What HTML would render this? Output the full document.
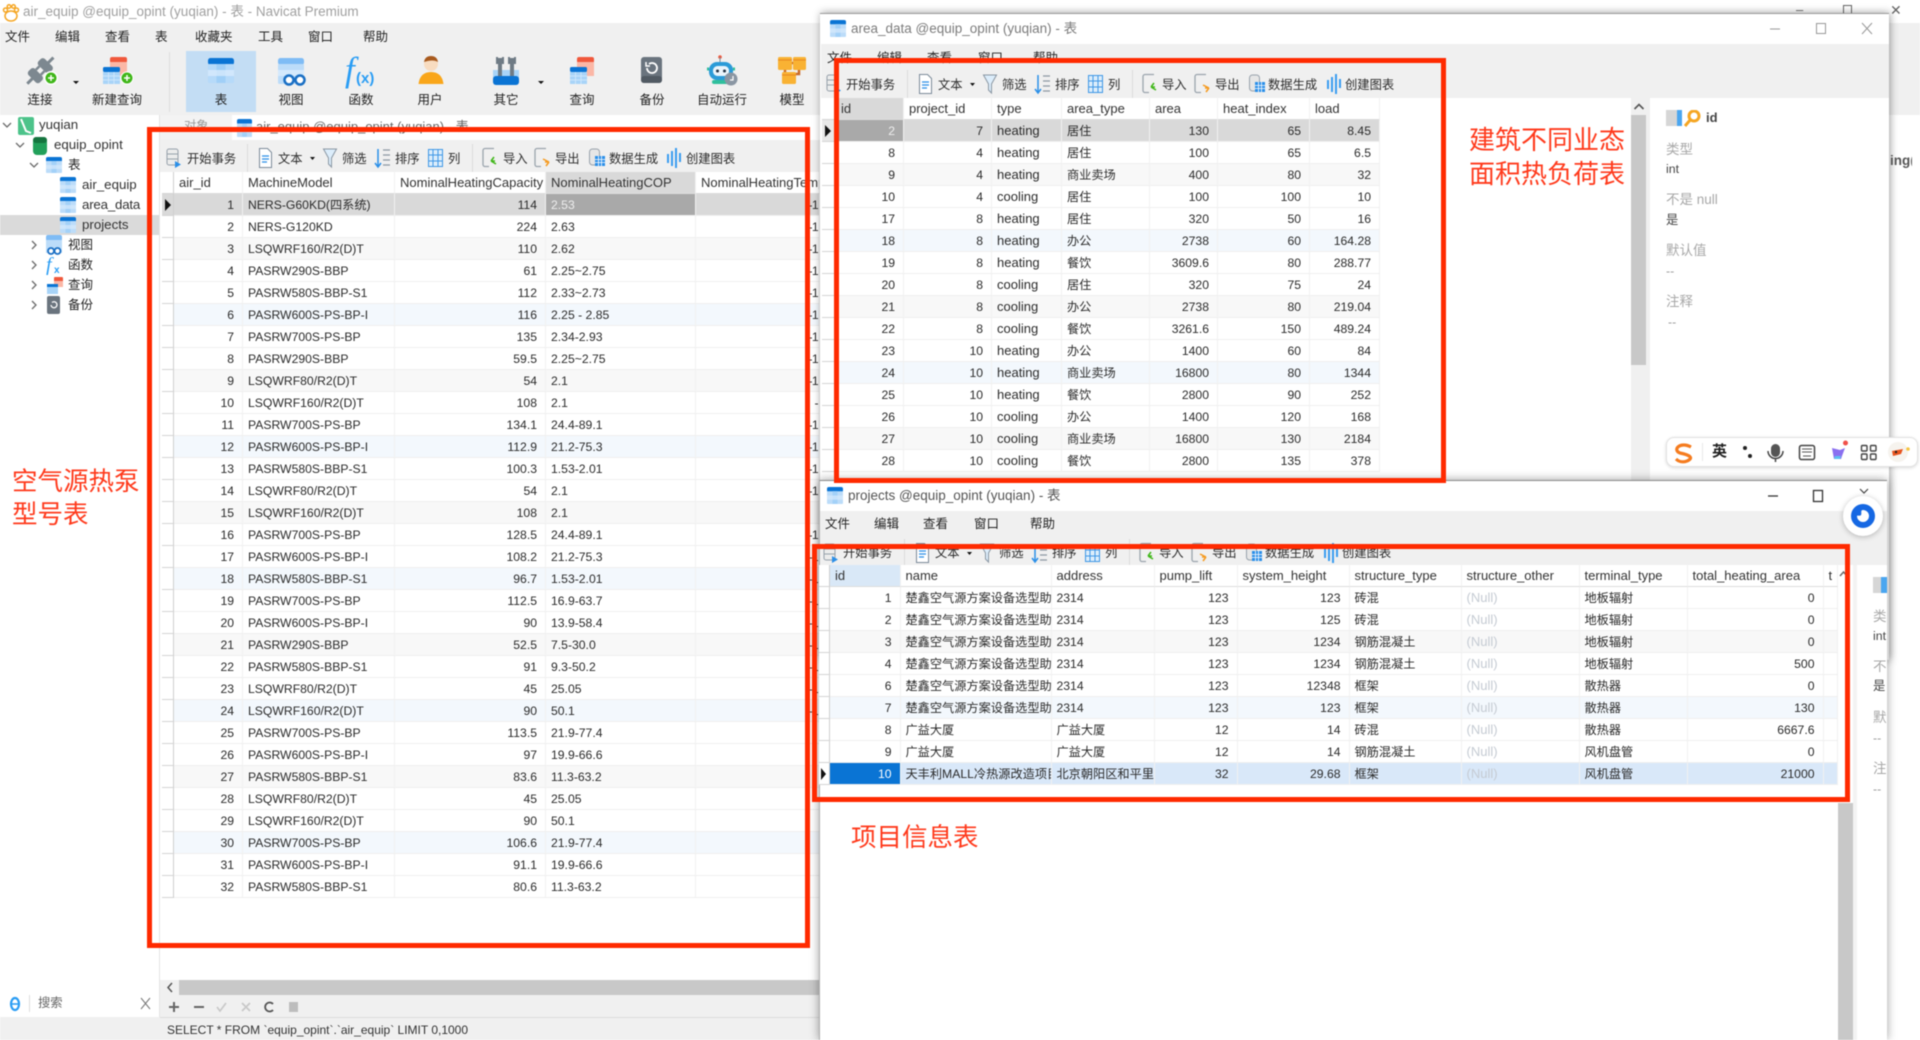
<!DOCTYPE html>
<html lang="zh-CN"><head><meta charset="utf-8"><title>Navicat Premium</title>
<style>
html,body{margin:0;padding:0;background:#fff;width:1920px;height:1040px;overflow:hidden}
*{box-sizing:border-box}
#r{position:absolute;left:0;top:0;width:1920px;height:1040px;overflow:hidden;filter:blur(.55px);font-family:"Liberation Sans","Noto Sans CJK SC",sans-serif;color:#2b2b2b;background:#fff}
.b{position:absolute}
.t{position:absolute;white-space:nowrap;line-height:20px;font-size:12.3px}
.m{font-size:12.5px;color:#222}
.c{transform:translateX(-50%)}
.tree{font-size:13.3px;color:#333}
.ttl{font-size:13.5px;color:#7c7c7c}
.tw{position:absolute;overflow:hidden}
table{border-collapse:separate;border-spacing:0;table-layout:fixed;position:absolute;left:0;top:0}
th,td{height:22px;padding:1px 8px 0 5px;white-space:nowrap;overflow:hidden;font-weight:normal;text-align:left;border-right:1px solid #f1f1f1;border-bottom:1px solid #efefef;line-height:20px;font-size:12.2px;color:#2b2b2b}
th{font-size:13px;padding-top:0;line-height:21px;background:#fff;border-bottom:1px solid #dcdcdc;color:#333}
th:first-child,td:first-child{padding:0;background:#fff;border-right:1px solid #cfcfcf;border-bottom:1px solid #d4d4d4}
tbody tr:nth-child(6n+3) td{background:#f8f8f8}
tbody tr:nth-child(6n) td{background:#f3f8fd}
tbody tr:nth-child(6n+3) td:first-child,tbody tr:nth-child(6n) td:first-child{background:#fff}
#t1 td:nth-child(2),#t1 td:nth-child(4),#t1 td:nth-child(6){text-align:right}
#t1 td:nth-child(6){padding-right:1px;letter-spacing:-.6px}
#t2 td:nth-child(2),#t2 td:nth-child(3),#t2 td:nth-child(6),#t2 td:nth-child(7),#t2 td:nth-child(8){text-align:right}
#t2 td:nth-child(4){font-size:13px}
#t3 td:nth-child(2),#t3 td:nth-child(5),#t3 td:nth-child(6),#t3 td:nth-child(10){text-align:right}
#t3 td:nth-child(8){font-size:13px;color:#c5cbd3}
#t1 tr.g td,#t2 tr.g td{background:#d9d9d9}
#t1 tr.g td.s,#t2 tr.g td.s{background:#a9a9a9;color:#eee}
#t2 tr.g td:first-child{background:#e9e9e9}
#t3 tr.h td{background:#d9e8f9}
#t3 tr.h td:first-child{background:#fff}
#t3 tr.h td.s{background:#0a74d4;color:#fff}
th.gh{background:#d9d9d9}
th.bh{background:#d9e8f7}
.tri{position:absolute;width:0;height:0;border-top:6px solid transparent;border-bottom:6px solid transparent;border-left:6px solid #111}
.red{position:absolute;border:5px solid #ff2a00}
.lab{position:absolute;white-space:nowrap;color:#ff3a1c;font-size:25.5px;line-height:33px}
.pl{position:absolute;white-space:nowrap;font-size:13.5px;line-height:18px;color:#a8a8a8}
.pv{position:absolute;white-space:nowrap;font-size:12.3px;line-height:18px;color:#444}
</style></head><body>
<div id="r">

<svg width="0" height="0" style="position:absolute">
<defs>
<symbol id="tbl" viewBox="0 0 16 20" preserveAspectRatio="none">
<rect x="0" y="0" width="16" height="6" rx="2" fill="#0a74d4"/>
<rect x="0" y="5" width="16" height="15" rx="1" fill="#bcdcf9"/>
<rect x="5.5" y="5" width="5" height="15" fill="#a3d1f8"/>
<rect x="0" y="10" width="16" height="5" fill="#d7eafc" opacity=".7"/>
</symbol>
<symbol id="tbi" viewBox="160 -14 600 28">
<g fill="none" stroke="#dcdcdc"><path d="M247.5 -14V14M472.5 -14V14"/></g>
<rect x="167" y="-9" width="11" height="16" rx="2" fill="#ececec" stroke="#96a0aa"/><path d="M167 -4h11M167 1h11" stroke="#96a0aa"/><path d="M175 3l6 3.5-6 3.5z" fill="#2b8fe8"/>
<path d="M259.5 -9.5h8l4 4v15h-12z" fill="#fff" stroke="#7b8a99"/><path d="M262 -2h7M262 1h7M262 4h5" stroke="#2b8fe8" stroke-width="1.3"/>
<path d="M310 -1h5l-2.5 3z" fill="#111"/>
<path d="M323.5 -9h13l-5 9v9l-3 -3v-6z" fill="#dcedfb" stroke="#8a97a3"/>
<path d="M378 -9v17M375 5l3 4 3-4" fill="none" stroke="#2b8fe8" stroke-width="1.5"/><path d="M383 -8h7M383 -3h7M383 2h7M383 7h7" stroke="#8d98a2" stroke-width="1.2"/>
<g fill="#dcedfb" stroke="#3f97e6"><rect x="428.5" y="-8.5" width="14" height="17"/><path d="M433 -8.5v17M438 -8.5v17M428.5 -3h14M428.5 3h14" fill="none"/></g>
<path d="M494 -9.5h-9a2 2 0 0 0 -2 2v14a2 2 0 0 0 2 2h4" fill="none" stroke="#9aa4ad" stroke-width="1.3"/><path d="M496 6l-5-3M491 3l3-4M491 3h4" fill="none" stroke="#3fb618" stroke-width="1.5"/>
<path d="M546 -9.5h-9a2 2 0 0 0 -2 2v14a2 2 0 0 0 2 2h4" fill="none" stroke="#9aa4ad" stroke-width="1.3"/><path d="M543 1l6 3M549 4l-3 4M549 4h-4" fill="none" stroke="#f59a1f" stroke-width="1.5"/>
<rect x="589.5" y="-9" width="10" height="16" rx="3" fill="#e6e6e6" stroke="#98a2ac"/><rect x="595" y="-2" width="10" height="10" fill="#2b8fe8"/><path d="M598.5 -2v10M601.5 -2v10M595 1.5h10M595 4.5h10" stroke="#fff" stroke-width=".8"/>
<path d="M668 -4v9M672 -7v15M676 -10v20M680 -5v9" stroke="#3b9cf0" stroke-width="2"/>
</symbol>
</defs>
</svg>

<!-- ========= main window ========= -->
<div class="b" style="left:0;top:23px;width:1920px;height:92px;background:#f0f0f0"></div>
<svg class="b" style="left:2px;top:3px" width="18" height="20" viewBox="0 0 18 20"><g fill="none" stroke="#f5a623" stroke-width="1.5"><ellipse cx="9" cy="13" rx="6" ry="5"/><circle cx="3.5" cy="7" r="2"/><circle cx="14.5" cy="7" r="2"/><circle cx="7" cy="3.5" r="1.8"/><circle cx="11.5" cy="3.5" r="1.8"/></g></svg>
<div class="t" style="left:23px;top:2px;font-size:13.5px;color:#a0a0a0">air_equip @equip_opint (yuqian) - 表 - Navicat Premium</div>
<div class="t" style="left:1796px;top:0;font-size:13px;color:#666">–</div>
<div class="b" style="left:1843px;top:5px;width:9px;height:9px;border:1px solid #666"></div>
<div class="t" style="left:1890px;top:0;font-size:14px;color:#666">✕</div>

<div class="t m" style="left:5px;top:27px">文件</div><div class="t m" style="left:55px;top:27px">编辑</div><div class="t m" style="left:105px;top:27px">查看</div><div class="t m" style="left:155px;top:27px">表</div><div class="t m" style="left:195px;top:27px">收藏夹</div><div class="t m" style="left:258px;top:27px">工具</div><div class="t m" style="left:308px;top:27px">窗口</div><div class="t m" style="left:363px;top:27px">帮助</div>

<div class="b" style="left:186px;top:51px;width:70px;height:61px;background:#c3ddf4"></div>
<div class="b" style="left:169px;top:52px;width:1px;height:60px;background:#dedede"></div>

<svg class="b" style="left:0;top:0" width="820" height="115" viewBox="0 0 820 115">
<g transform="rotate(-45 40 71)" fill="#7d8890"><rect x="29" y="63" width="9" height="16" rx="3"/><rect x="43" y="63" width="9" height="16" rx="3"/><rect x="38" y="66" width="5" height="2.5"/><rect x="38" y="73" width="5" height="2.5"/><rect x="22" y="69.5" width="8" height="3"/><rect x="51" y="69.5" width="8" height="3"/></g>
<circle cx="51" cy="78" r="7" fill="#fff"/><circle cx="51" cy="78" r="5.5" fill="#3fb618"/><path d="M48 78h6M51 75v6" stroke="#fff" stroke-width="1.5"/>
<path d="M73 81h6l-3 3z" fill="#111"/>
<rect x="110" y="57" width="17" height="6" rx="2" fill="#f0583c"/><rect x="110" y="62" width="17" height="14" fill="#fbb7a6"/>
<rect x="103" y="67" width="17" height="5" rx="1.5" fill="#0a74d4"/><rect x="103" y="72" width="17" height="12" fill="#a8d4f8"/><path d="M108.5 72v12M114 72v12M103 76h17M103 80h17" stroke="#d5eafc" stroke-width=".8"/>
<circle cx="127" cy="78" r="6.5" fill="#fff"/><circle cx="127" cy="78" r="5.5" fill="#3fb618"/><path d="M124 78h6M127 75v6" stroke="#fff" stroke-width="1.5"/>
<rect x="208" y="58" width="26" height="7" rx="2.5" fill="#0a74d4"/><rect x="208" y="64" width="26" height="19" rx="1.5" fill="#b6daf9"/><rect x="216.5" y="64" width="9" height="19" fill="#a0cff7"/><rect x="208" y="70" width="26" height="6" fill="#d9ebfc" opacity=".75"/>
<rect x="278" y="58" width="26" height="7" rx="2.5" fill="#7fbcf5"/><rect x="278" y="64" width="26" height="20" rx="1.5" fill="#bcdcf9"/><rect x="278" y="70" width="26" height="6" fill="#dcedfc" opacity=".75"/>
<circle cx="289" cy="80" r="4.5" fill="#fff" stroke="#1a6fc4" stroke-width="2.5"/><circle cx="300" cy="80" r="4.5" fill="#fff" stroke="#1a6fc4" stroke-width="2.5"/>
<text x="345" y="81" font-family="Liberation Serif,serif" font-style="italic" font-size="35" fill="#2a9df4">f</text><text x="356" y="83" font-family="Liberation Sans,sans-serif" font-size="15" font-weight="bold" fill="#2a9df4">(x)</text>
<path d="M418.5 84Q420 72 431 72Q442 72 443.5 84Z" fill="#f9a61a"/><circle cx="431" cy="64" r="7" fill="#f8dcc0"/><path d="M424 62Q425 56 431 56Q437 56 438 62Q433 59 424 62Z" fill="#a85a1e"/>
<rect x="493" y="70" width="26" height="8" fill="#a8d4f8"/><rect x="493" y="76" width="26" height="9" rx="3" fill="#0a74d4"/>
<path d="M500 58v18M512 58v18" stroke="#6f7b85" stroke-width="4"/><path d="M497 57v6h6v-6M509 57v6h6v-6" fill="none" stroke="#6f7b85" stroke-width="2"/>
<path d="M538 81h6l-3 3z" fill="#111"/>
<rect x="577" y="57" width="17" height="6" rx="2" fill="#f0583c"/><rect x="577" y="62" width="17" height="14" fill="#fbb7a6"/>
<rect x="570" y="67" width="17" height="5" rx="1.5" fill="#0a74d4"/><rect x="570" y="72" width="17" height="12" fill="#a8d4f8"/><path d="M575.5 72v12M581 72v12M570 76h17M570 80h17" stroke="#d5eafc" stroke-width=".8"/>
<rect x="641" y="57" width="21" height="26" rx="3" fill="#6a747e"/><rect x="641" y="76" width="21" height="7" rx="3" fill="#515a63"/><path d="M647 68a5 5 0 1 0 2-4" fill="none" stroke="#fff" stroke-width="1.8"/><path d="M646 62v4h4" fill="none" stroke="#fff" stroke-width="1.5"/>
<circle cx="720" cy="57" r="1.8" fill="#f0583c"/><path d="M720 57v5" stroke="#7b8a99"/><rect x="709" y="62" width="24" height="18" rx="8" fill="#2b9bd8"/><rect x="713" y="66" width="16" height="10" rx="4.5" fill="#eaf4fb"/><circle cx="717.5" cy="71" r="1.5" fill="#234"/><circle cx="724.5" cy="71" r="1.5" fill="#234"/><rect x="712" y="80" width="16" height="4" rx="2" fill="#2fbf9c"/><path d="M707 69h2M733 69h2" stroke="#2fbf9c" stroke-width="3"/>
<circle cx="731" cy="79" r="6.5" fill="#8a96a3"/><path d="M733 76v4h-3" fill="none" stroke="#fff" stroke-width="1.2"/>
<path d="M792 63h5M785 70v4M799 70v4h-6" fill="none" stroke="#c86a2a" stroke-width="2.5"/>
<rect x="778" y="57" width="14" height="13" rx="1.5" fill="#f9b233"/><rect x="793" y="57" width="13" height="13" rx="1.5" fill="#f9b233"/><rect x="782" y="72" width="14" height="12" rx="1.5" fill="#f9b233"/>
<path d="M778 60h14M793 60h13M782 75h14" stroke="#e8871e"/>
</svg>

<div class="t m c" style="left:40px;top:90px">连接</div>
<div class="t m c" style="left:117px;top:90px">新建查询</div>
<div class="t m c" style="left:221px;top:90px">表</div>
<div class="t m c" style="left:291px;top:90px">视图</div>
<div class="t m c" style="left:361px;top:90px">函数</div>
<div class="t m c" style="left:430px;top:90px">用户</div>
<div class="t m c" style="left:506px;top:90px">其它</div>
<div class="t m c" style="left:582px;top:90px">查询</div>
<div class="t m c" style="left:652px;top:90px">备份</div>
<div class="t m c" style="left:722px;top:90px">自动运行</div>
<div class="t m c" style="left:792px;top:90px">模型</div>

<!-- tree -->
<div class="b" style="left:0;top:215px;width:159px;height:20px;background:#dadada"></div>
<svg class="b" style="left:0;top:115px" width="90" height="200" viewBox="0 0 90 200">
<g fill="none" stroke="#6c6c6c" stroke-width="1.3"><path d="M3 8l4 4 4-4M16 28l4 4 4-4M30 48l4 4 4-4"/><path d="M32 126l4 4-4 4M32 146l4 4-4 4M32 166l4 4-4 4M32 186l4 4-4 4"/></g>
<rect x="18" y="2" width="16" height="18" rx="2" fill="#4cc38a"/><path d="M21 4l5 12 5 2" fill="none" stroke="#fff" stroke-width="2"/>
<rect x="33" y="22" width="14" height="18" rx="4" fill="#22a05a"/><rect x="33" y="22" width="14" height="6" rx="3" fill="#15753f"/>
</svg>
<svg class="b" style="left:46px;top:157px" width="16" height="16"><use href="#tbl" width="16" height="16"/></svg>
<svg class="b" style="left:60px;top:177px" width="16" height="16"><use href="#tbl" width="16" height="16"/></svg>
<svg class="b" style="left:60px;top:197px" width="16" height="16"><use href="#tbl" width="16" height="16"/></svg>
<svg class="b" style="left:60px;top:217px" width="16" height="16"><use href="#tbl" width="16" height="16"/></svg>
<svg class="b" style="left:46px;top:235px" width="16" height="20" viewBox="0 0 16 20"><rect width="16" height="6" rx="2" fill="#7fbcf5"/><rect y="5" width="16" height="13" fill="#bcdcf9"/><circle cx="5" cy="16" r="3" fill="#fff" stroke="#1a6fc4" stroke-width="1.8"/><circle cx="11.5" cy="16" r="3" fill="#fff" stroke="#1a6fc4" stroke-width="1.8"/></svg>
<svg class="b" style="left:46px;top:255px" width="16" height="20" viewBox="0 0 16 20"><text x="0" y="16" font-family="Liberation Serif,serif" font-style="italic" font-size="20" fill="#2a9df4">f</text><text x="8" y="18" font-family="Liberation Sans,sans-serif" font-size="10" font-weight="bold" fill="#2a9df4">x</text></svg>
<svg class="b" style="left:46px;top:275px" width="18" height="20" viewBox="0 0 18 20"><rect x="8" y="2" width="9" height="5" rx="1" fill="#f0583c"/><rect x="8" y="6" width="9" height="6" fill="#fbb7a6"/><rect x="1" y="9" width="11" height="3" fill="#0a74d4"/><rect x="1" y="12" width="11" height="7" fill="#a8d4f8"/></svg>
<svg class="b" style="left:46px;top:295px" width="16" height="20" viewBox="0 0 16 20"><rect x="1" y="1" width="13" height="18" rx="2" fill="#6a747e"/><path d="M5 10a3 3 0 1 0 1-2.5" fill="none" stroke="#fff" stroke-width="1.3"/></svg>
<div class="t tree" style="left:39px;top:115px">yuqian</div>
<div class="t tree" style="left:54px;top:135px">equip_opint</div>
<div class="t m" style="left:68px;top:155px">表</div>
<div class="t tree" style="left:82px;top:175px">air_equip</div>
<div class="t tree" style="left:82px;top:195px;letter-spacing:-.2px">area_data</div>
<div class="t tree" style="left:82px;top:215px">projects</div>
<div class="t m" style="left:68px;top:235px">视图</div>
<div class="t m" style="left:68px;top:255px">函数</div>
<div class="t m" style="left:68px;top:275px">查询</div>
<div class="t m" style="left:68px;top:295px">备份</div>

<!-- tabs -->
<div class="b" style="left:160px;top:115px;width:72px;height:25px;background:#f3f3f3"></div>
<div class="t" style="left:184px;top:116px;color:#999">对象</div>
<svg class="b" style="left:237px;top:119px" width="15" height="18"><use href="#tbl" width="15" height="18"/></svg>
<div class="t" style="left:256px;top:117px;font-size:13px;color:#666">air_equip @equip_opint (yuqian) - 表</div>
<div class="b" style="left:160px;top:140px;width:660px;height:32px;background:#f0f0f0"></div>
<div class="b" style="left:159px;top:115px;width:1px;height:925px;background:#e4e4e4"></div>

<!-- toolbar 1 -->
<svg class="b" style="left:160px;top:144px" width="600" height="28"><use href="#tbi" width="600" height="28"/></svg>
<div class="t" style="left:187px;top:149px">开始事务</div><div class="t" style="left:278px;top:149px">文本</div><div class="t" style="left:342px;top:149px">筛选</div><div class="t" style="left:395px;top:149px">排序</div><div class="t" style="left:448px;top:149px">列</div><div class="t" style="left:503px;top:149px">导入</div><div class="t" style="left:555px;top:149px">导出</div><div class="t" style="left:609px;top:149px">数据生成</div><div class="t" style="left:686px;top:149px">创建图表</div>

<!-- table 1 -->
<div class="tw" style="left:162px;top:172px;width:658px;height:726px">
<table id="t1" style="width:658px"><colgroup><col style="width:12px"><col style="width:69px"><col style="width:152px"><col style="width:151px"><col style="width:150px"><col style="width:124px"></colgroup>
<thead><tr><th></th><th>air_id</th><th>MachineModel</th><th>NominalHeatingCapacity</th><th class="gh">NominalHeatingCOP</th><th>NominalHeatingTemp</th></tr></thead>
<tbody>
<tr class="g"><td></td><td>1</td><td>NERS-G60KD(四系统)</td><td>114</td><td class="s">2.53</td><td>-1</td></tr>
<tr><td></td><td>2</td><td>NERS-G120KD</td><td>224</td><td>2.63</td><td>-1</td></tr>
<tr><td></td><td>3</td><td>LSQWRF160/R2(D)T</td><td>110</td><td>2.62</td><td>-1</td></tr>
<tr><td></td><td>4</td><td>PASRW290S-BBP</td><td>61</td><td>2.25~2.75</td><td>-1</td></tr>
<tr><td></td><td>5</td><td>PASRW580S-BBP-S1</td><td>112</td><td>2.33~2.73</td><td>-1</td></tr>
<tr><td></td><td>6</td><td>PASRW600S-PS-BP-I</td><td>116</td><td>2.25 - 2.85</td><td>-1</td></tr>
<tr><td></td><td>7</td><td>PASRW700S-PS-BP</td><td>135</td><td>2.34-2.93</td><td>-1</td></tr>
<tr><td></td><td>8</td><td>PASRW290S-BBP</td><td>59.5</td><td>2.25~2.75</td><td>-1</td></tr>
<tr><td></td><td>9</td><td>LSQWRF80/R2(D)T</td><td>54</td><td>2.1</td><td>-1</td></tr>
<tr><td></td><td>10</td><td>LSQWRF160/R2(D)T</td><td>108</td><td>2.1</td><td>-</td></tr>
<tr><td></td><td>11</td><td>PASRW700S-PS-BP</td><td>134.1</td><td>24.4-89.1</td><td>-1</td></tr>
<tr><td></td><td>12</td><td>PASRW600S-PS-BP-I</td><td>112.9</td><td>21.2-75.3</td><td>-1</td></tr>
<tr><td></td><td>13</td><td>PASRW580S-BBP-S1</td><td>100.3</td><td>1.53-2.01</td><td>-1</td></tr>
<tr><td></td><td>14</td><td>LSQWRF80/R2(D)T</td><td>54</td><td>2.1</td><td>-1</td></tr>
<tr><td></td><td>15</td><td>LSQWRF160/R2(D)T</td><td>108</td><td>2.1</td><td></td></tr>
<tr><td></td><td>16</td><td>PASRW700S-PS-BP</td><td>128.5</td><td>24.4-89.1</td><td>-1</td></tr>
<tr><td></td><td>17</td><td>PASRW600S-PS-BP-I</td><td>108.2</td><td>21.2-75.3</td><td>-1</td></tr>
<tr><td></td><td>18</td><td>PASRW580S-BBP-S1</td><td>96.7</td><td>1.53-2.01</td><td>-1</td></tr>
<tr><td></td><td>19</td><td>PASRW700S-PS-BP</td><td>112.5</td><td>16.9-63.7</td><td>-1</td></tr>
<tr><td></td><td>20</td><td>PASRW600S-PS-BP-I</td><td>90</td><td>13.9-58.4</td><td>-1</td></tr>
<tr><td></td><td>21</td><td>PASRW290S-BBP</td><td>52.5</td><td>7.5-30.0</td><td>-1</td></tr>
<tr><td></td><td>22</td><td>PASRW580S-BBP-S1</td><td>91</td><td>9.3-50.2</td><td>-1</td></tr>
<tr><td></td><td>23</td><td>LSQWRF80/R2(D)T</td><td>45</td><td>25.05</td><td>-1</td></tr>
<tr><td></td><td>24</td><td>LSQWRF160/R2(D)T</td><td>90</td><td>50.1</td><td>-1</td></tr>
<tr><td></td><td>25</td><td>PASRW700S-PS-BP</td><td>113.5</td><td>21.9-77.4</td><td></td></tr>
<tr><td></td><td>26</td><td>PASRW600S-PS-BP-I</td><td>97</td><td>19.9-66.6</td><td></td></tr>
<tr><td></td><td>27</td><td>PASRW580S-BBP-S1</td><td>83.6</td><td>11.3-63.2</td><td></td></tr>
<tr><td></td><td>28</td><td>LSQWRF80/R2(D)T</td><td>45</td><td>25.05</td><td></td></tr>
<tr><td></td><td>29</td><td>LSQWRF160/R2(D)T</td><td>90</td><td>50.1</td><td></td></tr>
<tr><td></td><td>30</td><td>PASRW700S-PS-BP</td><td>106.6</td><td>21.9-77.4</td><td></td></tr>
<tr><td></td><td>31</td><td>PASRW600S-PS-BP-I</td><td>91.1</td><td>19.9-66.6</td><td></td></tr>
<tr><td></td><td>32</td><td>PASRW580S-BBP-S1</td><td>80.6</td><td>11.3-63.2</td><td></td></tr>
</tbody></table></div>
<div class="tri" style="left:165px;top:199px"></div>

<!-- bottom of main -->
<div class="b" style="left:160px;top:980px;width:660px;height:15px;background:#f0f0f0"></div>
<div class="b" style="left:179px;top:980px;width:641px;height:15px;background:#c8c8c8"></div>
<svg class="b" style="left:165px;top:982px" width="10" height="11"><path d="M7 1L3 5.5L7 10" fill="none" stroke="#555" stroke-width="1.5"/></svg>
<div class="b" style="left:160px;top:995px;width:660px;height:45px;background:#f0f0f0"></div>
<div class="b" style="left:160px;top:1017px;width:660px;height:1px;background:#dcdcdc"></div>
<div class="b" style="left:0;top:1017px;width:160px;height:23px;background:#f0f0f0"></div>
<svg class="b" style="left:160px;top:998px" width="150" height="18" viewBox="160 998 150 18"><path d="M169 1007h10M174 1002v10M194 1007h10" stroke="#666" stroke-width="2"/><path d="M217 1007l3 4 6-8" fill="none" stroke="#c8c8c8" stroke-width="1.6"/><path d="M242 1003l8 8M250 1003l-8 8" stroke="#c8c8c8" stroke-width="1.6"/><path d="M273 1004a4.5 4.5 0 1 0 0 6" fill="none" stroke="#555" stroke-width="1.8"/><rect x="289" y="1002" width="9" height="10" fill="#bdbdbd"/></svg>
<div class="t" style="left:167px;top:1020px;font-size:12px;color:#333">SELECT * FROM `equip_opint`.`air_equip` LIMIT 0,1000</div>
<svg class="b" style="left:8px;top:995px" width="16" height="18" viewBox="0 0 16 18"><ellipse cx="7" cy="9" rx="4" ry="6" fill="none" stroke="#2a9df4" stroke-width="2.2"/><path d="M3 9h8" stroke="#2a9df4" stroke-width="1.6"/></svg>
<div class="b" style="left:29px;top:995px;width:1px;height:17px;background:#ddd"></div>
<div class="t" style="left:38px;top:993px;color:#666">搜索</div>
<svg class="b" style="left:139px;top:997px" width="13" height="13"><path d="M2 1l9 11M11 1L2 12" stroke="#777"/></svg>

<!-- ========= window 2 ========= -->
<div class="b" style="left:820px;top:13px;width:1069px;height:647px;background:#fff;border-top:1px solid #9a9a9a;box-shadow:1px 0 8px rgba(0,0,0,.4)"></div>
<div class="b" style="left:821px;top:44px;width:1068px;height:54px;background:#f0f0f0"></div>
<svg class="b" style="left:830px;top:20px" width="16" height="17"><use href="#tbl" width="16" height="17"/></svg>
<div class="t ttl" style="left:851px;top:19px">area_data @equip_opint (yuqian) - 表</div>
<svg class="b" style="left:1770px;top:20px" width="105" height="18" viewBox="1770 20 105 18"><path d="M1770 29h10" stroke="#999"/><rect x="1816.5" y="23.5" width="9" height="10" fill="none" stroke="#999"/><path d="M1862 23l10 11M1872 23l-10 11" stroke="#999"/></svg>
<div class="t m" style="left:827px;top:48px">文件</div><div class="t m" style="left:877px;top:48px">编辑</div><div class="t m" style="left:927px;top:48px">查看</div><div class="t m" style="left:978px;top:48px">窗口</div><div class="t m" style="left:1033px;top:48px">帮助</div>
<svg class="b" style="left:820px;top:70px" width="600" height="28"><use href="#tbi" width="600" height="28"/></svg>
<div class="t" style="left:846px;top:75px">开始事务</div><div class="t" style="left:938px;top:75px">文本</div><div class="t" style="left:1002px;top:75px">筛选</div><div class="t" style="left:1055px;top:75px">排序</div><div class="t" style="left:1108px;top:75px">列</div><div class="t" style="left:1162px;top:75px">导入</div><div class="t" style="left:1215px;top:75px">导出</div><div class="t" style="left:1268px;top:75px">数据生成</div><div class="t" style="left:1345px;top:75px">创建图表</div>

<div class="tw" style="left:822px;top:98px;width:558px;height:382px">
<table id="t2" style="width:558px"><colgroup><col style="width:14px"><col style="width:68px"><col style="width:88px"><col style="width:70px"><col style="width:88px"><col style="width:68px"><col style="width:92px"><col style="width:70px"></colgroup>
<thead><tr><th></th><th class="gh">id</th><th>project_id</th><th>type</th><th>area_type</th><th>area</th><th>heat_index</th><th>load</th></tr></thead>
<tbody>
<tr class="g"><td></td><td class="s">2</td><td>7</td><td>heating</td><td>居住</td><td>130</td><td>65</td><td>8.45</td></tr>
<tr><td></td><td>8</td><td>4</td><td>heating</td><td>居住</td><td>100</td><td>65</td><td>6.5</td></tr>
<tr><td></td><td>9</td><td>4</td><td>heating</td><td>商业卖场</td><td>400</td><td>80</td><td>32</td></tr>
<tr><td></td><td>10</td><td>4</td><td>cooling</td><td>居住</td><td>100</td><td>100</td><td>10</td></tr>
<tr><td></td><td>17</td><td>8</td><td>heating</td><td>居住</td><td>320</td><td>50</td><td>16</td></tr>
<tr><td></td><td>18</td><td>8</td><td>heating</td><td>办公</td><td>2738</td><td>60</td><td>164.28</td></tr>
<tr><td></td><td>19</td><td>8</td><td>heating</td><td>餐饮</td><td>3609.6</td><td>80</td><td>288.77</td></tr>
<tr><td></td><td>20</td><td>8</td><td>cooling</td><td>居住</td><td>320</td><td>75</td><td>24</td></tr>
<tr><td></td><td>21</td><td>8</td><td>cooling</td><td>办公</td><td>2738</td><td>80</td><td>219.04</td></tr>
<tr><td></td><td>22</td><td>8</td><td>cooling</td><td>餐饮</td><td>3261.6</td><td>150</td><td>489.24</td></tr>
<tr><td></td><td>23</td><td>10</td><td>heating</td><td>办公</td><td>1400</td><td>60</td><td>84</td></tr>
<tr><td></td><td>24</td><td>10</td><td>heating</td><td>商业卖场</td><td>16800</td><td>80</td><td>1344</td></tr>
<tr><td></td><td>25</td><td>10</td><td>heating</td><td>餐饮</td><td>2800</td><td>90</td><td>252</td></tr>
<tr><td></td><td>26</td><td>10</td><td>cooling</td><td>办公</td><td>1400</td><td>120</td><td>168</td></tr>
<tr><td></td><td>27</td><td>10</td><td>cooling</td><td>商业卖场</td><td>16800</td><td>130</td><td>2184</td></tr>
<tr><td></td><td>28</td><td>10</td><td>cooling</td><td>餐饮</td><td>2800</td><td>135</td><td>378</td></tr>
</tbody></table></div>
<div class="tri" style="left:825px;top:125px"></div>

<div class="b" style="left:1631px;top:98px;width:19px;height:382px;background:#f0f0f0"></div>
<div class="b" style="left:1631px;top:115px;width:15px;height:250px;background:#c8c8c8"></div>
<svg class="b" style="left:1633px;top:102px" width="12" height="9"><path d="M1.5 7L6 2.5L10.5 7" fill="none" stroke="#555" stroke-width="1.6"/></svg>

<svg class="b" style="left:1666px;top:110px" width="36" height="18" viewBox="0 0 36 18"><rect width="16" height="16" fill="#d6d6d6"/><rect x="11" y="0" width="5" height="16" fill="#4aa6f0"/><circle cx="28" cy="6" r="5" fill="none" stroke="#f5a623" stroke-width="3"/><path d="M25 9l-6 7" stroke="#f5a623" stroke-width="3"/></svg>
<div class="pv" style="left:1706px;top:109px;font-weight:bold;font-size:13px">id</div>
<div class="pl" style="left:1666px;top:141px">类型</div><div class="pv" style="left:1666px;top:160px">int</div>
<div class="pl" style="left:1666px;top:191px">不是 null</div><div class="pv" style="left:1666px;top:211px">是</div>
<div class="pl" style="left:1666px;top:242px">默认值</div><div class="pv" style="left:1666px;top:262px;color:#999">--</div>
<div class="pl" style="left:1666px;top:293px">注释</div><div class="pv" style="left:1668px;top:313px;color:#999">--</div>

<!-- main window peeking right -->
<div class="t" style="left:1890px;top:151px;font-size:13.5px;font-weight:bold;color:#555;width:22px;overflow:hidden">ing(</div>

<!-- ========= window 3 ========= -->
<div class="b" style="left:819px;top:480px;width:1068px;height:560px;background:#fff;border-top:1px solid #8a8a8a;border-left:1px solid #b0b0b0;box-shadow:0 0 9px rgba(0,0,0,.38)"></div>
<div class="b" style="left:820px;top:511px;width:1067px;height:54px;background:#f0f0f0"></div>
<svg class="b" style="left:827px;top:487px" width="16" height="17"><use href="#tbl" width="16" height="17"/></svg>
<div class="t ttl" style="left:848px;top:486px;color:#555">projects @equip_opint (yuqian) - 表</div>
<svg class="b" style="left:1768px;top:486px" width="105" height="20" viewBox="1768 486 105 20"><path d="M1768 496h10" stroke="#333" stroke-width="1.3"/><rect x="1813.5" y="490.5" width="9" height="11" fill="none" stroke="#333" stroke-width="1.3"/><path d="M1860 489l4 4 4-4" fill="none" stroke="#444" stroke-width="1.2"/></svg>
<div class="t m" style="left:825px;top:514px">文件</div><div class="t m" style="left:874px;top:514px">编辑</div><div class="t m" style="left:923px;top:514px">查看</div><div class="t m" style="left:974px;top:514px">窗口</div><div class="t m" style="left:1030px;top:514px">帮助</div>
<svg class="b" style="left:817px;top:539px" width="600" height="28"><use href="#tbi" width="600" height="28"/></svg>
<div class="t" style="left:843px;top:543px">开始事务</div><div class="t" style="left:935px;top:543px">文本</div><div class="t" style="left:999px;top:543px">筛选</div><div class="t" style="left:1052px;top:543px">排序</div><div class="t" style="left:1105px;top:543px">列</div><div class="t" style="left:1159px;top:543px">导入</div><div class="t" style="left:1212px;top:543px">导出</div><div class="t" style="left:1265px;top:543px">数据生成</div><div class="t" style="left:1342px;top:543px">创建图表</div>

<div class="tw" style="left:819px;top:565px;width:1019px;height:220px">
<table id="t3" style="width:1019px"><colgroup><col style="width:11px"><col style="width:70.5px"><col style="width:151px"><col style="width:103px"><col style="width:83px"><col style="width:112px"><col style="width:112px"><col style="width:118px"><col style="width:108px"><col style="width:136px"><col style="width:14.5px"></colgroup>
<thead><tr><th></th><th class="bh">id</th><th>name</th><th>address</th><th>pump_lift</th><th>system_height</th><th>structure_type</th><th>structure_other</th><th>terminal_type</th><th>total_heating_area</th><th>t</th></tr></thead>
<tbody>
<tr><td></td><td>1</td><td>楚鑫空气源方案设备选型助手</td><td>2314</td><td>123</td><td>123</td><td>砖混</td><td>(Null)</td><td>地板辐射</td><td>0</td><td></td></tr>
<tr><td></td><td>2</td><td>楚鑫空气源方案设备选型助手</td><td>2314</td><td>123</td><td>125</td><td>砖混</td><td>(Null)</td><td>地板辐射</td><td>0</td><td></td></tr>
<tr><td></td><td>3</td><td>楚鑫空气源方案设备选型助手</td><td>2314</td><td>123</td><td>1234</td><td>钢筋混凝土</td><td>(Null)</td><td>地板辐射</td><td>0</td><td></td></tr>
<tr><td></td><td>4</td><td>楚鑫空气源方案设备选型助手</td><td>2314</td><td>123</td><td>1234</td><td>钢筋混凝土</td><td>(Null)</td><td>地板辐射</td><td>500</td><td></td></tr>
<tr><td></td><td>6</td><td>楚鑫空气源方案设备选型助手</td><td>2314</td><td>123</td><td>12348</td><td>框架</td><td>(Null)</td><td>散热器</td><td>0</td><td></td></tr>
<tr><td></td><td>7</td><td>楚鑫空气源方案设备选型助手</td><td>2314</td><td>123</td><td>123</td><td>框架</td><td>(Null)</td><td>散热器</td><td>130</td><td></td></tr>
<tr><td></td><td>8</td><td>广益大厦</td><td>广益大厦</td><td>12</td><td>14</td><td>砖混</td><td>(Null)</td><td>散热器</td><td>6667.6</td><td></td></tr>
<tr><td></td><td>9</td><td>广益大厦</td><td>广益大厦</td><td>12</td><td>14</td><td>钢筋混凝土</td><td>(Null)</td><td>风机盘管</td><td>0</td><td></td></tr>
<tr class="h"><td></td><td class="s">10</td><td>天丰利MALL冷热源改造项目</td><td>北京朝阳区和平里</td><td>32</td><td>29.68</td><td>框架</td><td>(Null)</td><td>风机盘管</td><td>21000</td><td></td></tr>
</tbody></table></div>
<div class="tri" style="left:821px;top:768px;border-left-width:5px"></div>

<div class="b" style="left:1838px;top:803px;width:15px;height:237px;background:#c8c8c8"></div>
<div class="b" style="left:1853px;top:565px;width:4px;height:475px;background:#f3f3f3"></div>
<svg class="b" style="left:1839px;top:570px" width="9" height="8"><path d="M1 6L4.5 2L8 6" fill="none" stroke="#666" stroke-width="1.4"/></svg>
<div class="tw" style="left:1857px;top:565px;width:30px;height:475px">
<svg class="b" style="left:16px;top:12px" width="14" height="17"><rect width="16" height="16" fill="#d6d6d6"/><rect x="8" width="6" height="16" fill="#4aa6f0"/></svg>
<div class="pl" style="left:16px;top:43px">类型</div><div class="pv" style="left:16px;top:62px">int</div>
<div class="pl" style="left:16px;top:93px">不是 null</div><div class="pv" style="left:16px;top:112px">是</div>
<div class="pl" style="left:16px;top:144px">默认值</div><div class="pv" style="left:16px;top:164px;color:#999">--</div>
<div class="pl" style="left:16px;top:195px">注释</div><div class="pv" style="left:16px;top:215px;color:#999">--</div>
</div>

<!-- IME bar -->
<div class="b" style="left:1666px;top:437px;width:252px;height:30px;background:#fff;border:1px solid #e2e2e2;border-radius:8px;box-shadow:0 1px 3px rgba(0,0,0,.15)"></div>
<svg class="b" style="left:1666px;top:437px" width="252" height="32" viewBox="1666 437 252 32">
<path d="M1691 447C1680 441 1672 450 1680 453C1690 455 1694 458 1687 461C1682 463 1678 461 1676 459" fill="none" stroke="#f57c1f" stroke-width="3.2"/>
<path d="M1702.5 443v18" stroke="#e8e8e8"/>
<circle cx="1745" cy="448" r="2" fill="#222"/><circle cx="1750" cy="456" r="2" fill="#222"/>
<rect x="1771" y="444" width="9" height="13" rx="4.5" fill="#555"/><path d="M1768 451a7.5 7.5 0 0 0 15 0M1775.5 459v3" fill="none" stroke="#444" stroke-width="1.5"/>
<rect x="1799.5" y="445.5" width="15" height="14" rx="2" fill="none" stroke="#444" stroke-width="1.5"/><path d="M1802 449h10M1802 452h10M1803 456h8" stroke="#555"/>
<path d="M1832 448l8 2 5-2-3 8-1 3h-7z" fill="#8a6ff0"/><path d="M1835 456h6l-1 3h-6z" fill="#5cc0f0"/><circle cx="1845.5" cy="443" r="2.5" fill="#f0504a"/>
<g fill="none" stroke="#444" stroke-width="1.4"><rect x="1861.5" y="445.5" width="5.5" height="5.5" rx="1"/><rect x="1870.5" y="445.5" width="5.5" height="5.5" rx="1"/><rect x="1861.5" y="454" width="5.5" height="5.5" rx="1"/><rect x="1870.5" y="454" width="5.5" height="5.5" rx="1"/></g>
<circle cx="1898" cy="452" r="10" fill="#f6f3ee"/><path d="M1892 451l11-2-2 5-8 2z" fill="#e8541e"/><circle cx="1896" cy="452" r="1.2" fill="#222"/><circle cx="1908" cy="449" r="1.8" fill="#f5c542"/>
</svg>
<div class="t" style="left:1712px;top:442px;font-size:15px;font-weight:bold;color:#222">英</div>

<!-- floating blue circle -->
<div class="b" style="left:1843px;top:496px;width:40px;height:40px;border-radius:50%;background:#fff;box-shadow:0 1px 6px rgba(0,0,0,.25)"></div>
<svg class="b" style="left:1851px;top:504px" width="24" height="24" viewBox="0 0 24 24"><circle cx="12" cy="12" r="12" fill="#1668e3"/><path d="M12 6a6 6 0 1 1-6 6c0-1 3 .5 4-1s-1-5 2-5z" fill="#fff"/></svg>

<!-- red annotations -->
<div class="red" style="left:147px;top:127px;width:663px;height:821px"></div>
<div class="red" style="left:834px;top:58px;width:612px;height:425px"></div>
<div class="red" style="left:812px;top:544px;width:1038px;height:258px"></div>

<div class="lab" style="left:12px;top:466px">空气源热泵<br>型号表</div>
<div class="lab" style="left:1469px;top:123px;font-size:26px;line-height:34px">建筑不同业态<br>面积热负荷表</div>
<div class="lab" style="left:851px;top:822px">项目信息表</div>

</div>
</body></html>
